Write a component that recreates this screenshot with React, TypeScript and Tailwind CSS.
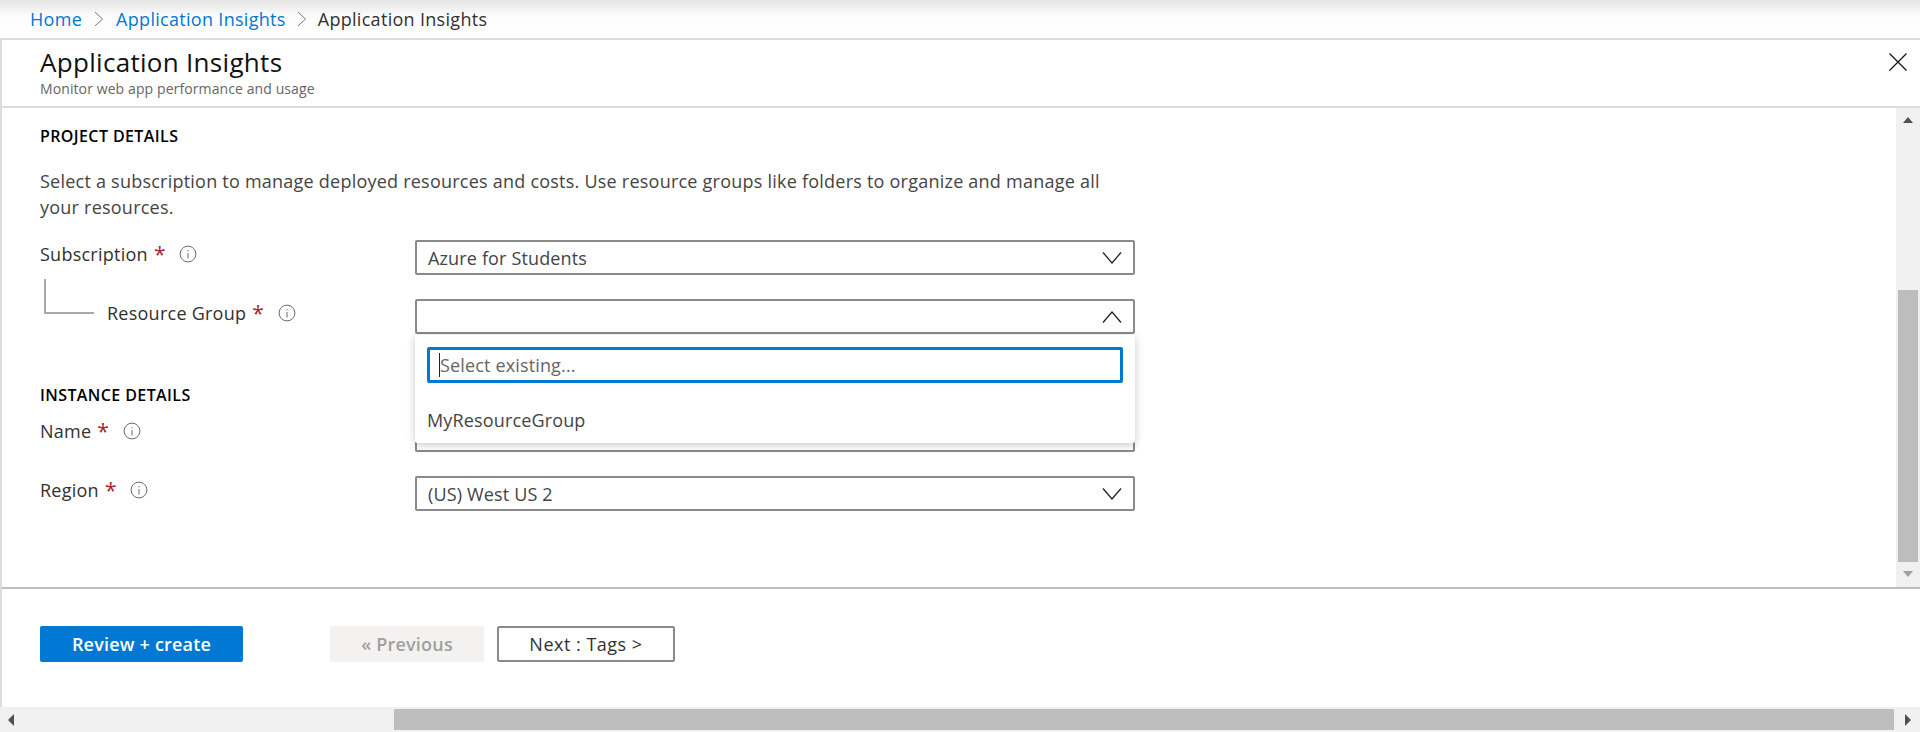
const font = "font-['Open_Sans',sans-serif]";

function Info() {
  return (
    <svg width="18" height="18" viewBox="0 0 18 18" fill="none" className="shrink-0">
      <circle cx="9" cy="9" r="7.9" stroke="#6b6b6b" strokeWidth="1" />
      <path d="M9 8v5.5" stroke="#6b6b6b" strokeWidth="1" />
      <path d="M9 5v1.3" stroke="#6b6b6b" strokeWidth="1" />
    </svg>
  );
}

function Chevron({ up = false }: { up?: boolean }) {
  return (
    <svg width="20" height="12" viewBox="0 0 20 12" fill="none">
      <path d={up ? 'M1 11.5 10 1l9 10.5' : 'M1 .5 10 11 19 .5'} stroke="#222" strokeWidth="1.3" />
    </svg>
  );
}

function Label({ text, indent = false }: { text: string; indent?: boolean }) {
  return (
    <div className={`flex h-[28px] w-[375px] shrink-0 items-center ${indent ? 'pl-[67px]' : ''}`}>
      <span className="text-[18px] tracking-[0.25px] text-[#323130]">{text}</span>
      <span className="ml-[6px] text-[21px] leading-[28px] text-[#a4262c]">*</span>
      <span className="ml-[14px]">
        <Info />
      </span>
    </div>
  );
}

function Select({ value, open = false }: { value?: string; open?: boolean }) {
  return (
    <div className="flex h-[35px] w-[720px] items-center justify-between rounded-[2px] border-2 border-[#8a8a8a] bg-white pl-[11px] pr-[11px] pt-[1px]">
      <span className="text-[18px] tracking-[0.15px] text-[#444]">{value}</span>
      <Chevron up={open} />
    </div>
  );
}

function Row({ label, indent, children }: { label: string; indent?: boolean; children: React.ReactNode }) {
  return (
    <div className="flex">
      <Label text={label} indent={indent} />
      {children}
    </div>
  );
}

export default function App() {
  return (
    <div className={`flex h-[732px] w-[1920px] flex-col overflow-hidden bg-white ${font}`}>
      <nav className="flex h-[38px] shrink-0 items-center bg-gradient-to-b from-[#e4e4e4] via-[#fbfbfb] via-40% to-white pl-[30px] text-[18px] tracking-[0.3px]">
        <a className="text-[#0078d4]">Home</a>
        <svg width="10" height="16" viewBox="0 0 10 16" fill="none" className="mx-[12px]">
          <path d="m1 1 7.5 7L1 15" stroke="#777" strokeWidth="1" />
        </svg>
        <a className="text-[#0078d4]">Application Insights</a>
        <svg width="10" height="16" viewBox="0 0 10 16" fill="none" className="mx-[11px]">
          <path d="m1 1 7.5 7L1 15" stroke="#777" strokeWidth="1" />
        </svg>
        <span className="text-[#323130]">Application Insights</span>
      </nav>

      <div className="flex min-h-0 flex-1 flex-col border-l-2 border-t-2 border-[#dcdcdc]">
        <header className="relative h-[68px] shrink-0 border-b-2 border-[#dcdcdc] pl-[38px]">
          <h1 className="pt-[3px] text-[26px] leading-[38px] tracking-[0.3px] text-[#111]">Application Insights</h1>
          <p className="text-[14px] leading-[16px] tracking-[0.1px] text-[#666]">Monitor web app performance and usage</p>
          <svg width="18" height="18" viewBox="0 0 18 18" fill="none" className="absolute right-[13px] top-[13px]">
            <path d="m.5.5 17 17m0-17-17 17" stroke="#111" strokeWidth="1.2" />
          </svg>
        </header>

        <div className="flex h-[479px] shrink-0">
          <main className="min-w-0 flex-1 pl-[38px]">
            <h2 className="pt-[18px] text-[16px] font-semibold leading-[20px] tracking-[0.4px] text-black">PROJECT DETAILS</h2>
            <p className="mt-[22px] w-[1075px] text-[18px] leading-[26px] tracking-[0.23px] text-[#444]">
              Select a subscription to manage deployed resources and costs. Use resource groups like folders to organize and manage all your resources.
            </p>
            <div className="relative mt-[20px] flex flex-col gap-[24px]">
              <Row label="Subscription">
                <Select value="Azure for Students" />
              </Row>
              <div className="absolute left-[4px] top-[39px] h-[35px] w-[50px] border-b-2 border-l-2 border-[#a8a8a8]" />
              <Row label="Resource Group" indent>
                <div className="relative">
                  <Select open />
                  <div className="absolute left-0 top-[36px] z-10 h-[108px] w-[720px] rounded-b-[2px] bg-white pl-[12px] pt-[12px] shadow-[0_2px_8px_rgba(0,0,0,0.22)]">
                    <div className="flex h-[36px] w-[696px] items-center rounded-[2px] border-[3px] border-[#0078d4] pl-[9px]">
                      <span className="h-[24px] w-px bg-[#222]" />
                      <span className="text-[18px] tracking-[0.15px] text-[#666]">Select existing...</span>
                    </div>
                    <p className="mt-[25px] text-[18px] leading-[24px] tracking-[0.15px] text-[#444]">MyResourceGroup</p>
                  </div>
                </div>
              </Row>
              <h2 className="absolute left-0 top-[145px] text-[16px] font-semibold leading-[20px] tracking-[0.4px] text-black">INSTANCE DETAILS</h2>
              <div className="mt-[59px]">
                <Row label="Name">
                  <Select />
                </Row>
              </div>
              <Row label="Region">
                <Select value="(US) West US 2" />
              </Row>
            </div>
          </main>

          <aside className="flex w-[24px] shrink-0 flex-col items-center bg-[#f0f0f0]">
            <div className="mt-[9px] h-0 w-0 border-x-[5.5px] border-b-[6px] border-x-transparent border-b-[#505050]" />
            <div className="mt-[167px] h-[272px] w-[20px] bg-[#bdbdbd]" />
            <div className="mt-[9px] h-0 w-0 border-x-[5.5px] border-t-[6px] border-x-transparent border-t-[#a0a0a0]" />
          </aside>
        </div>

        <footer className="flex flex-1 border-t-2 border-[#bdbdbd] pl-[38px] pt-[37px]">
          <button className="h-[36px] w-[203px] rounded-[2px] bg-[#0078d4] text-[18px] font-semibold tracking-[0.2px] text-white">Review + create</button>
          <button className="ml-[87px] h-[36px] w-[154px] rounded-[2px] bg-[#f3f2f1] text-[18px] font-semibold tracking-[0.2px] text-[#a19f9d]">« Previous</button>
          <button className="ml-[13px] h-[36px] w-[178px] rounded-[2px] border-2 border-[#8a8a8a] bg-white text-[18px] tracking-[0.5px] text-[#323130]">Next : Tags &gt;</button>
        </footer>
      </div>

      <div className="flex h-[25px] shrink-0 items-center bg-[#f0f0f0]">
        <div className="ml-[8px] h-0 w-0 border-y-[6px] border-r-[6px] border-y-transparent border-r-[#505050]" />
        <div className="ml-[380px] h-[21px] w-[1500px] bg-[#bdbdbd]" />
        <div className="ml-[11px] h-0 w-0 border-y-[6px] border-l-[6px] border-y-transparent border-l-[#505050]" />
      </div>
    </div>
  );
}
